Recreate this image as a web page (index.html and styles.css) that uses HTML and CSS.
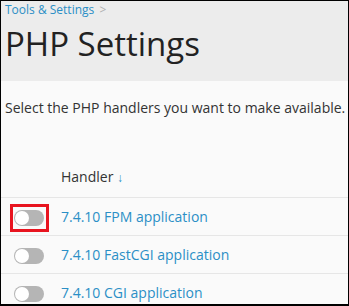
FILE: index.html
```html
<!DOCTYPE html>
<html lang="en">
<head>
  <meta charset="UTF-8">
  <title>PHP Settings</title>
  <link rel="stylesheet" href="styles.css">
</head>
<body>

<div class="frame">
  <div class="page-header">
    <div class="breadcrumbs">
      <a href="#">Tools &amp; Settings</a>
      <span class="crumb-sep">&gt;</span>
    </div>
    <h1>PHP Settings</h1>
  </div>

  <div class="content">
    <p class="hint">Select the PHP handlers you want to make available.</p>

    <table class="list">
      <thead>
        <tr>
          <th class="col-toggle"></th>
          <th>Handler <span class="sort">&#8595;</span></th>
        </tr>
      </thead>
      <tbody>
        <tr>
          <td class="col-toggle"><span class="highlight"><span class="switch"></span></span></td>
          <td><a href="#">7.4.10 FPM application</a></td>
        </tr>
        <tr>
          <td class="col-toggle"><span class="switch"></span></td>
          <td><a href="#">7.4.10 FastCGI application</a></td>
        </tr>
        <tr>
          <td class="col-toggle"><span class="switch"></span></td>
          <td><a href="#">7.4.10 CGI application</a></td>
        </tr>
      </tbody>
    </table>
  </div>
</div>

</body>
</html>
```

FILE: styles.css
```css
html, body {
  margin: 0;
  padding: 0;
}

body {
  font-family: "Open Sans", sans-serif;
  color: #222;
}

.frame {
  box-sizing: border-box;
  width: 349px;
  height: 306px;
  border: 1px solid #000;
  border-bottom-width: 2px;
  background: #fafafa;
  overflow: hidden;
}

.page-header {
  background: #ececec;
  padding: 0 4px;
  height: 80px;
  box-sizing: border-box;
}

.breadcrumbs {
  font-size: 12px;
  line-height: 18px;
}

.breadcrumbs a {
  color: #2b8fc6;
  text-decoration: none;
}

.crumb-sep {
  color: #b0b0b0;
  margin-left: 2px;
}

h1 {
  margin: 3px 0 0;
  font-size: 33px;
  font-weight: 400;
  line-height: 44px;
  color: #222;
}

.hint {
  margin: 0;
  padding: 17px 0 0 4px;
  font-size: 14px;
  line-height: 20px;
  color: #333;
  white-space: nowrap;
}

.list {
  width: 100%;
  border-collapse: collapse;
  margin-top: 49px;
  font-size: 14px;
}

.list th {
  text-align: left;
  font-weight: 400;
  color: #333;
  line-height: 20px;
  padding: 0 0 9px;
  border-bottom: 1px solid #e6e6e6;
}

.list td {
  line-height: 20px;
  padding: 9px 0 8px;
  border-bottom: 1px solid #e6e6e6;
}

.col-toggle {
  width: 60px;
}

.sort {
  color: #2b8fc6;
  font-size: 12px;
  font-weight: 600;
}

.list a {
  color: #2b8fc6;
  text-decoration: none;
}

.switch {
  display: inline-block;
  width: 30px;
  height: 16px;
  border-radius: 8px;
  background: #b5b5b5;
  position: relative;
  vertical-align: middle;
  margin-left: 13px;
}

.switch::after {
  content: "";
  position: absolute;
  left: 1px;
  top: 1px;
  width: 14px;
  height: 14px;
  border-radius: 50%;
  background: #fff;
}

.highlight {
  display: inline-block;
  border: 3px solid #e8141f;
  padding: 3px 2px 3px 1px;
  margin: -8px 0 -8px 9px;
  line-height: 0;
  vertical-align: middle;
}

.highlight .switch {
  margin-left: 0;
}
```
